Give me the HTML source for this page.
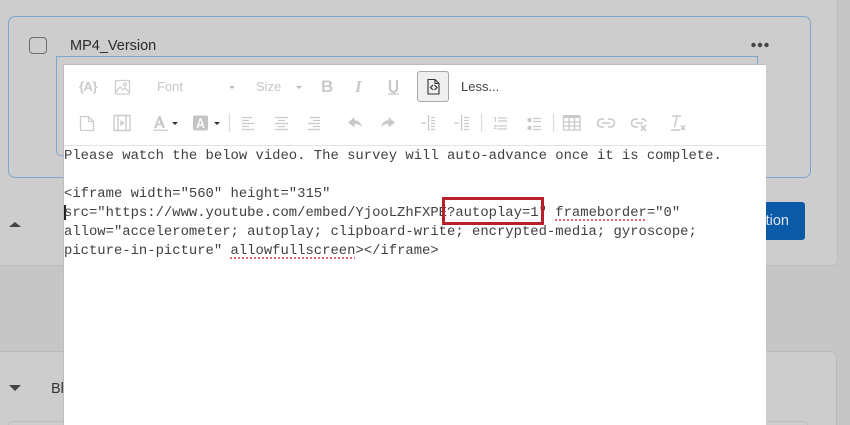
<!DOCTYPE html>
<html><head><meta charset="utf-8"><style>
html,body{margin:0;padding:0;width:850px;height:425px;overflow:hidden}
body{position:relative;background:#c6c6c6;font-family:"Liberation Sans",sans-serif}
#r{position:absolute;left:0;top:0;width:850px;height:425px;overflow:hidden;filter:blur(.35px)}
.a{position:absolute}
.m{position:absolute;left:64px;font:13.88px/19px "Liberation Mono",monospace;color:#404040;white-space:pre}
.w{text-decoration:underline dotted #ec6a6c 1.5px;text-underline-offset:3px}
</style></head><body><div id="r">
<div class="a" style="left:0;top:0;width:837px;height:265px;border-right:1px solid #bababa;border-bottom:1px solid #bababa;border-radius:0 0 6px 0;background:#cdcdcd"></div>
<div class="a" style="left:0;top:351px;width:837px;height:74px;border-top:1px solid #bababa;border-right:1px solid #bababa;border-radius:0 6px 0 0;box-sizing:border-box;background:#cdcdcd"></div>
<div class="a" style="left:8px;top:421px;width:800px;height:4px;box-sizing:border-box;border:1px solid #bdbdbd;border-bottom:0;border-radius:6px 6px 0 0"></div>
<div class="a" style="left:8px;top:16px;width:801px;height:160px;border:1px solid #7fa6cc;border-radius:7px"></div>
<div class="a" style="left:29px;top:37px;width:16px;height:15px;border:1px solid #6e6e6e;border-radius:4px"></div>
<div class="a" style="left:70px;top:37px;font-size:14.5px;line-height:19px;color:#2b2b2b">MP4_Version</div>
<svg class="a" style="left:750px;top:41px" width="20" height="8"><g fill="#444"><circle cx="3.500" cy="4" r="2.200"/><circle cx="10" cy="4" r="2.200"/><circle cx="16.500" cy="4" r="2.200"/></g></svg>
<div class="a" style="left:56px;top:56px;width:700px;height:98px;border:1px solid #7fa6cc;border-radius:0 0 0 5px"></div>
<svg class="a" style="left:8px;top:220px" width="14" height="8"><path d="M1 7L7 2L13 7Z" fill="#444"/></svg>
<svg class="a" style="left:8px;top:384px" width="14" height="8"><path d="M1 1H13L7 7Z" fill="#444"/></svg>
<div class="a" style="left:51px;top:381px;font-size:14.5px;line-height:17px;color:#333">Bl</div>
<div class="a" style="left:700px;top:202px;width:105px;height:38px;background:#0b5aa8;border-radius:3px;color:#dfe8f2;font-size:14.500px;line-height:39px;text-align:right;box-sizing:border-box;padding-right:16px">Question</div>
<div class="a" style="left:64px;top:65px;width:702px;height:360px;background:#fff;box-shadow:0 -1px 0 #bdbdbd,-1px 0 0 #bdbdbd"></div>
<div class="a" style="left:64px;top:145px;width:702px;height:1px;background:#e2e2e2"></div>

<div class="a" style="left:417px;top:71px;width:32px;height:31px;box-sizing:border-box;border:1px solid #a8a8a8;border-radius:3px;background:#efefef"></div>
<div class="a" style="left:461px;top:79px;font-size:13px;line-height:16px;color:#444">Less...</div>
<div class="a" style="left:157px;top:79px;font-size:13px;line-height:16px;color:#c6c6c6">Font</div>
<div class="a" style="left:256px;top:79px;font-size:13px;line-height:16px;color:#c6c6c6">Size</div>
<div class="a" style="left:79px;top:79px;font-size:13px;line-height:16px;font-weight:bold;color:#c9c9c9;letter-spacing:-.5px">{A}</div>
<div class="a" style="left:321px;top:78px;font-size:17px;line-height:18px;font-weight:bold;color:#c9c9c9">B</div>
<div class="a" style="left:355px;top:78px;font:italic bold 17px/18px 'Liberation Serif',serif;color:#c9c9c9">I</div>

<svg class="a" style="left:0;top:0" width="850" height="425" fill="none" stroke="#cdcdcd" stroke-width="1.300">
<!-- row 1 -->
<rect x="115.500" y="80.500" width="14" height="13.500" rx="1"/><path d="M116 92l4-5 3 3 2-2 4 4"/><circle cx="125" cy="84.500" r="1.500"/>
<path d="M229 86h6l-3 3zM296 86h6l-3 3z" fill="#bdbdbd" stroke="none"/>
<path d="M390 80v8.500a3.500 3.500 0 0 0 7 0V80" stroke="#c9c9c9" stroke-width="2.200"/><path d="M388 94h11" stroke="#c9c9c9" stroke-width="1.300"/>
<!-- code icon -->
<path d="M428 79.500h7l4 4v10.500h-11zM435 79.500v4h4" stroke="#333" stroke-width="1.100"/>
<path d="M433 85l-2.500 2.500 2.500 2.500M434.500 85l2.500 2.500-2.500 2.500" stroke="#333" stroke-width="1.200"/>
<!-- row 2 -->
<path d="M80.500 116.500h8l5 5v9h-13zM88.500 116.500v5h5"/>
<path d="M114 115.500h16v15h-16zM118 115.500v15M126 115.500v15" stroke-width="1.500"/><path d="M120.500 120l4 3-4 3z" fill="#c8c8c8" stroke="none"/>
<g stroke="none">
<path d="M154 128l4.500-12h2l4.500 12h-2.500l-.9-2.700h-4.200l-.9 2.700zM157.600 123.500h2.800l-1.400-4.400z" fill="#c9c9c9"/>
<rect x="153" y="129.500" width="15" height="1.500" fill="#d4d4d4"/>
<path d="M172 122h6l-3 3z" fill="#333"/>
<rect x="193" y="115.500" width="15" height="15" rx="2" fill="#c4c4c4"/>
<path d="M196.500 128l3.300-10h1.500l3.300 10h-1.800l-.7-2.200h-3.100l-.7 2.200zM199 124.300h3l-1.500-4z" fill="#fff"/>
<path d="M214 122h6l-3 3z" fill="#333"/>
</g>
<path d="M229.500 113v19M481.500 113v19M553.500 113v19" stroke="#dedede"/>
<g stroke="#c9c9c9" stroke-width="1.300">
<path d="M242 117.500h10M242 120.500h7M242 123.500h12M242 126.500h7M242 129.500h12"/>
<path d="M275 117.500h13M278 120.500h7M275 123.500h13M278 126.500h7M275 129.500h13"/>
<path d="M310 117.500h10M313 120.500h7M308 123.500h12M313 126.500h7M308 129.500h12"/>
<path d="M428.500 115v16M421 123h5M431 117.500h4M431 120.500h4M431 123.500h4M431 126.500h4M431 129.500h4"/>
<path d="M461.500 115v16M454 123h5M464 117.500h5M464 120.500h5M464 123.500h5M464 126.500h5M464 129.500h5"/>
<path d="M498 118h9M498 121h9M498 126h9M498 129h9"/>
<path d="M533 118.500h8M533 121.500h8M533 126.500h8M533 129.500h8"/>
</g>
<g fill="#c9c9c9" stroke="none">
<path d="M348 122.500l6.500-5.500v3.200c4 0 6.500 2.500 7.500 7.300-1.500-2.500-4-3.500-7.500-3.500v3.500z"/>
<path d="M395 122.500l-6.500-5.500v3.200c-4 0-6.500 2.500-7.500 7.300 1.500-2.500 4-3.500 7.500-3.500v3.500z"/>
<path d="M494 117h2v5h-1v-4h-1zM494 125h3v1l-2 2h2v1h-3.200v-1l2-2h-1.800z"/>
<circle cx="529.500" cy="120" r="2.200"/><circle cx="529.500" cy="128" r="2.200"/>
<rect x="563" y="115" width="17" height="3"/>
</g>
<path d="M563.500 116v14h16.500v-14M563.500 122h16.500M563.500 126h16.500M569 117v13M574.500 117v13" stroke="#c9c9c9"/>
<path d="M604 119h-2.500a4 4 0 0 0 0 8h2.500M608 119h2.500a4 4 0 0 1 0 8h-2.500M602 123h8" stroke="#c9c9c9" stroke-width="1.600"/>
<path d="M638 119h-2.500a4 4 0 0 0 0 8h2.500M641 119h1.500a4 4 0 0 1 3.500 3M636 123h7M641 125l5 6M646 125l-5 6" stroke="#c9c9c9" stroke-width="1.500"/>
<path d="M672 116h9M677 116l-2.500 11M671 130h9M681 125.500l4 4.500M685 125.500l-4 4.500" stroke="#c9c9c9" stroke-width="1.500"/>
</svg>
<div class="a" style="left:64px;top:205px;width:1.500px;height:15px;background:#222"></div>
<div class="m" style="top:147px">Please watch the below video. The survey will auto-advance once it is complete.</div>
<div class="m" style="top:185px">&lt;iframe width="560" height="315"</div>
<div class="m" style="top:204px">src="https://www.youtube.com/embed/YjooLZhFXPE?autoplay=1" <span class="w">frameborder</span>="0"</div>
<div class="m" style="top:223px">allow="accelerometer; autoplay; clipboard-write; encrypted-media; gyroscope;</div>
<div class="m" style="top:242px">picture-in-picture" <span class="w">allowfullscreen</span>&gt;&lt;/iframe&gt;</div>
<div class="a" style="left:442px;top:197px;width:102px;height:28px;box-sizing:border-box;border:3px solid #b9202c"></div>
</div></body></html>
